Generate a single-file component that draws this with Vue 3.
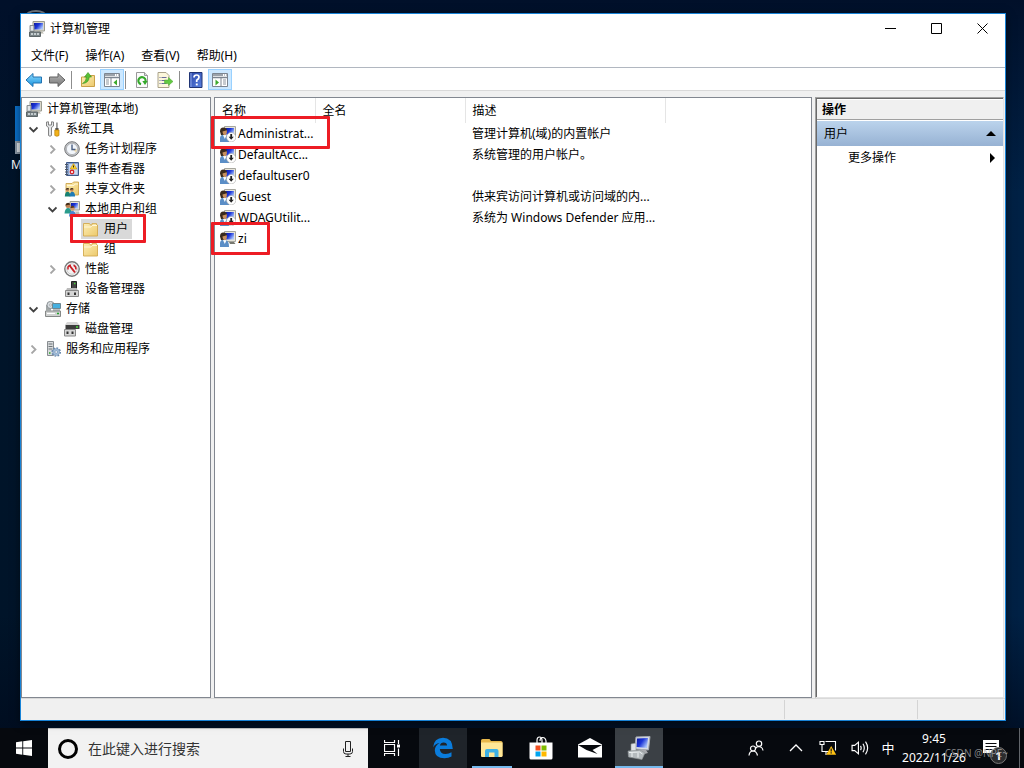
<script setup>
import { ref } from 'vue'

const menus = ['文件(F)', '操作(A)', '查看(V)', '帮助(H)']

const tree = [
  { label: '计算机管理(本地)', icon: 'mgmt', level: 0 },
  { label: '系统工具', icon: 'tools', level: 1, state: 'open' },
  { label: '任务计划程序', icon: 'clock', level: 2, state: 'closed' },
  { label: '事件查看器', icon: 'event', level: 2, state: 'closed' },
  { label: '共享文件夹', icon: 'share', level: 2, state: 'closed' },
  { label: '本地用户和组', icon: 'users', level: 2, state: 'open' },
  { label: '用户', icon: 'folder', level: 3, selected: true, marked: true },
  { label: '组', icon: 'folder', level: 3 },
  { label: '性能', icon: 'perf', level: 2, state: 'closed' },
  { label: '设备管理器', icon: 'device', level: 2 },
  { label: '存储', icon: 'storage', level: 1, state: 'open' },
  { label: '磁盘管理', icon: 'disk', level: 2 },
  { label: '服务和应用程序', icon: 'services', level: 1, state: 'closed' }
]

const users = [
  { name: 'Administrat...', desc: '管理计算机(域)的内置帐户', off: true, mark: 'wide' },
  { name: 'DefaultAcc...', desc: '系统管理的用户帐户。', off: true },
  { name: 'defaultuser0', desc: '', off: true },
  { name: 'Guest', desc: '供来宾访问计算机或访问域的内...', off: true },
  { name: 'WDAGUtilit...', desc: '系统为 Windows Defender 应用...', off: true },
  { name: 'zi', desc: '', off: false, mark: 'narrow' }
]

const apps = [
  { icon: 'edge', label: 'Edge', cls: 'hover' },
  { icon: 'explorer', label: '文件资源管理器', cls: 'running' },
  { icon: 'store', label: '应用商店', cls: '' },
  { icon: 'mail', label: '邮件', cls: '' },
  { icon: 'mgmtbig', label: '计算机管理', cls: 'active' }
]

const query = ref('')
</script>

<template>
  <svg class="sprites" aria-hidden="true">
    <defs>
      <linearGradient id="g-screen" x1="0" y1="0" x2="1" y2="0.6">
        <stop offset="0" stop-color="#0a18a0" /><stop offset="0.5" stop-color="#1c35d8" /><stop offset="1" stop-color="#a9c4fb" />
      </linearGradient>
      <linearGradient id="g-folder" x1="0" y1="0" x2="1" y2="1">
        <stop offset="0" stop-color="#fdeeb4" /><stop offset="1" stop-color="#ecc96c" />
      </linearGradient>
      <linearGradient id="g-back" x1="0" y1="0" x2="0" y2="1">
        <stop offset="0" stop-color="#8fdcff" /><stop offset="1" stop-color="#1590dc" />
      </linearGradient>
      <linearGradient id="g-fwd" x1="0" y1="0" x2="0" y2="1">
        <stop offset="0" stop-color="#b5b5b5" /><stop offset="1" stop-color="#777" />
      </linearGradient>
      <linearGradient id="g-help" x1="0" y1="0" x2="1" y2="1">
        <stop offset="0" stop-color="#2a45a8" /><stop offset="1" stop-color="#5a82e0" />
      </linearGradient>
    </defs>
    <symbol id="i-mgmt" viewBox="0 0 16 16">
      <path d="M4 0.5H15.5V10H4Z" fill="#d9d7cb" stroke="#9a9a90" />
      <path d="M5 2H14V8.5H5Z" fill="url(#g-screen)" />
      <path d="M8 10.5h5l2 2h-6z" fill="#b9b7ac" />
      <path d="M1 4.5h4v6H1z" fill="#c6ccd0" stroke="#8a8f92" />
      <path d="M2 6h2M2 8h2" stroke="#fff" />
      <path d="M0.5 11h11v4.5h-11z" fill="#7b8588" stroke="#5c6567" />
      <path d="M2 13h2M5 13h2M8 13h2" stroke="#dde4e5" stroke-width="1.4" />
    </symbol>
    <symbol id="i-tools" viewBox="0 0 16 16">
      <path d="M1.500 1v4L3.500 6.500v8q1.500 1.500 3 0v-8L8.500 5V1L6.500 .8V4h-3V.8z" fill="#e3e5e7" stroke="#777" stroke-width="0.9" />
      <path d="M11 1.500h1.800v6H11z" fill="#999" />
      <path d="M10.300 7h3.200v2h-3.200z" fill="#555" />
      <path d="M9.800 9h4.200v5.500q-2.100 1.600-4.200 0z" fill="#f2b21b" stroke="#b67c06" stroke-width="0.7" />
    </symbol>
    <symbol id="i-clock" viewBox="0 0 16 16">
      <circle cx="8" cy="8" r="7.3" fill="#c4c6c9" stroke="#75777a" />
      <circle cx="8" cy="8" r="5.6" fill="#f2f6fb" stroke="#9a9c9f" stroke-width="0.6" />
      <path d="M8 8l4 3.500A5 5 0 0 0 13 8z" fill="#f3d79a" opacity="0.7" />
      <path d="M8 3.500V8.500h3.500" fill="none" stroke="#4b5f82" stroke-width="1.400" />
    </symbol>
    <symbol id="i-event" viewBox="0 0 16 16">
      <path d="M2.500 1.500h12v13h-12z" fill="#8aa4cf" stroke="#405a8a" />
      <path d="M5 3h8.500v10.500H5z" fill="#c9d7ee" />
      <path d="M1 3.500h3M1 6h3M1 8.500h3M1 11h3M1 13.500h3" stroke="#4d5663" />
      <path d="M9.500 2.500l3.300 5.500H6.200z" fill="#ffd530" stroke="#bf8b00" stroke-width="0.6" />
      <path d="M9.500 4.500v2" stroke="#222" />
      <circle cx="8" cy="11" r="2.400" fill="#d8262c" />
      <path d="M7 10l2 2M9 10l-2 2" stroke="#fff" stroke-width="0.8" />
    </symbol>
    <symbol id="i-share" viewBox="0 0 16 16">
      <path d="M2 2.500h6l1.500-1.500h5v13H2z" fill="url(#g-folder)" stroke="#c79b3c" stroke-width="0.8" />
      <path d="M3 4.500h7l1-1.500h3" fill="none" stroke="#fff6d8" />
      <circle cx="3.500" cy="9" r="1.700" fill="#c88a58" /><path d="M1.600 8.800a2 2 0 0 1 3.800-.6z" fill="#43301e" />
      <circle cx="7.800" cy="9" r="1.700" fill="#c88a58" /><path d="M5.900 8.800a2 2 0 0 1 3.800-.6z" fill="#43301e" />
      <path d="M.8 15.500q.2-4.800 2.800-4.800t2.800 4.800z" fill="#178272" />
      <path d="M5.500 15.500q.2-4.800 2.800-4.800t2.800 4.800z" fill="#207bb5" />
    </symbol>
    <symbol id="i-users" viewBox="0 0 16 16">
      <path d="M6 0.500h9.500v8.500H6z" fill="#e4e2d8" stroke="#9b9b94" />
      <path d="M7 2h7v5.500H7z" fill="url(#g-screen)" />
      <circle cx="4" cy="4.500" r="2.500" fill="#bd8050" /><path d="M1.500 4.500a2.500 2.700 0 0 1 4.800-1z" fill="#3f2a18" />
      <path d="M.5 12.500q.5-5.500 3.500-5.500t4 5.500z" fill="#2a9c8c" />
      <circle cx="8.500" cy="7.500" r="2.200" fill="#d09a6a" /><path d="M6.300 7.300a2.200 2.400 0 0 1 4.300-.8z" fill="#5a3a20" />
      <path d="M5 15.500q.3-5.500 3.500-5.500t4 5.500z" fill="#4a86cf" />
      <path d="M11 10.500h4l.5 2.500h-3.500z" fill="#bebcb2" />
    </symbol>
    <symbol id="i-folder" viewBox="0 0 16 16">
      <path d="M.5 2.500h6l1 1.500h7v11H.5z" fill="url(#g-folder)" stroke="#d2a94e" stroke-width="0.9" />
      <path d="M9 5V2.500h4.500V5" fill="#f9e3a0" stroke="#d2a94e" stroke-width="0.8" />
      <path d="M1 6h7l1-1.500h5" fill="none" stroke="#fff6d8" />
    </symbol>
    <symbol id="i-perf" viewBox="0 0 16 16">
      <circle cx="8" cy="8" r="7.200" fill="#fff" stroke="#777" stroke-width="1.400" />
      <circle cx="8" cy="8" r="5.300" fill="#f2f2f2" stroke="#aaa" stroke-width="0.6" />
      <path d="M4 8.500V6Q5 4.200 7 4.300M9.500 4.300Q12 5 12 8.500" fill="none" stroke="#c91f26" stroke-width="1.500" />
      <path d="M5.500 4.500l5.500 7" stroke="#c91f26" stroke-width="2" />
    </symbol>
    <symbol id="i-device" viewBox="0 0 16 16">
      <path d="M7.500 0.500h5v7h-5z" fill="#444" stroke="#222" /><path d="M10 2.500h1.500" stroke="#48d13c" stroke-width="1.300" />
      <path d="M3 7h9.500l1.500 2.500H2z" fill="#bbb" />
      <path d="M1.500 9.500h13v6h-13z" fill="#d5d5d5" stroke="#888" />
      <path d="M3.500 11.500h2v2.500h-2zM10 11.500h2v2.500h-2z" fill="#333" />
    </symbol>
    <symbol id="i-storage" viewBox="0 0 16 16">
      <path d="M0.500 10h15v5.500h-15z" fill="#cfd1d0" stroke="#858887" /><path d="M2 12.500h8" stroke="#fff" />
      <path d="M12 12.500h2" stroke="#20a22b" stroke-width="1.600" />
      <path d="M1 4h5v6H1z" fill="#a3a8a8" /><circle cx="5.500" cy="4" r="3.600" fill="#d7dce0" stroke="#8c9296" /><circle cx="5.500" cy="4" r="1" fill="#fff" stroke="#777" stroke-width="0.5" />
      <path d="M7.500 2.500h8v5h-8z" fill="#45afdf" stroke="#6f8790" /><path d="M8 8.500h7v1H8z" fill="#747c80" />
    </symbol>
    <symbol id="i-disk" viewBox="0 0 16 16">
      <path d="M3 1h10l2.500 3H1z" fill="#d6d6d6" /><path d="M1.500 4h14v4h-14z" fill="#3c3c3c" />
      <path d="M12 6h2" stroke="#4ddd40" stroke-width="1.400" />
      <path d="M0.500 8.500h11v6.500h-11z" fill="#d5d5d5" stroke="#888" />
      <path d="M2.500 10.500h2v2.500h-2zM7.500 10.500h2v2.500h-2z" fill="#333" />
    </symbol>
    <symbol id="i-services" viewBox="0 0 16 16">
      <path d="M2.500 0.500h6v14h-6z" fill="#d8dbdd" stroke="#888d91" />
      <path d="M3.500 3h4M3.500 5.500h4M3.500 8h4" stroke="#6d7377" /><path d="M4 12h1.500" stroke="#2aa32a" stroke-width="1.300" />
      <circle cx="11.200" cy="11" r="4" fill="none" stroke="#6384aa" stroke-width="1.600" stroke-dasharray="1.700 1.400" />
      <circle cx="11.200" cy="11" r="3.400" fill="#a6c0dc" stroke="#6f90b6" stroke-width="0.600" /><circle cx="11.200" cy="11" r="1.300" fill="#fff" stroke="#6384aa" stroke-width="0.6" />
    </symbol>
    <symbol id="i-user" viewBox="0 0 16 16">
      <path d="M4.500 0.500h11v10h-11z" fill="#e6e4da" stroke="#a6a69e" />
      <path d="M5.500 2h8.500v6.500H5.500z" fill="url(#g-screen)" />
      <path d="M9 11h5l1.500 2h-5.500z" fill="#77786f" />
      <path d="M0 5.500q0-4 3.300-4T7 4.500L5 9H1z" fill="#3a2a1c" />
      <path d="M2.500 5.500L6.800 4.300Q7.300 8.800 5 9.200 2.700 9 2.500 5.500z" fill="#c8915f" />
      <path d="M0 16v-4q.3-3 3-3.200l2 1 1.500-.6Q9 10.500 9 16z" fill="#5b8ec6" />
      <path d="M3 9l1.800 4L6.500 9.300z" fill="#fff" />
    </symbol>
    <symbol id="i-down" viewBox="0 0 16 16">
      <circle cx="11.200" cy="11.200" r="4.700" fill="#fff" stroke="#999" stroke-width="0.5" />
      <path d="M10.300 8h1.800v2.800h1.700l-2.600 3-2.600-3h1.700z" fill="#222" />
    </symbol>
    <symbol id="i-back" viewBox="0 0 18 16">
      <path d="M1 8L8 1.500V5h8.500v6H8v3.500z" fill="url(#g-back)" stroke="#2272b0" />
    </symbol>
    <symbol id="i-fwd" viewBox="0 0 18 16">
      <path d="M17 8L10 1.500V5H1.500v6H10v3.500z" fill="url(#g-fwd)" stroke="#606060" />
    </symbol>
    <symbol id="i-up" viewBox="0 0 16 16">
      <path d="M1.500 5h6L9 3.500h5.500v11h-13z" fill="url(#g-folder)" stroke="#c9a048" />
      <path d="M2.500 11.500Q6 10 6.500 5H4.500L8 .5 11.500 5H9.300q-.5 6-6.800 6.500z" fill="#58c036" stroke="#389018" stroke-width="0.6" />
    </symbol>
    <symbol id="i-paneleft" viewBox="0 0 18 16">
      <path d="M1.500 1.500h15v13h-15z" fill="#fff" stroke="#7c8590" /><path d="M2 3h10M2 5.500h14" stroke="#7c8590" stroke-width="1.400" />
      <path d="M13 3h1M15 3h1" stroke="#7c8590" /><path d="M8 6v8.500" stroke="#7c8590" />
      <path d="M3 8h3M3 10h3M3 12h3" stroke="#8e969f" /><path d="M14 7.500v6L10.500 10.500z" fill="#3ca92c" />
    </symbol>
    <symbol id="i-paneright" viewBox="0 0 18 16">
      <path d="M1.500 1.500h15v13h-15z" fill="#fff" stroke="#7c8590" /><path d="M2 3h10M2 5.500h14" stroke="#7c8590" stroke-width="1.400" />
      <path d="M13 3h1M15 3h1" stroke="#7c8590" /><path d="M10 6v8.500" stroke="#7c8590" />
      <path d="M12 8h3M12 10h3M12 12h3" stroke="#8e969f" /><path d="M4.500 7.500v6L8 10.500z" fill="#3ca92c" />
    </symbol>
    <symbol id="i-refresh" viewBox="0 0 16 16">
      <path d="M2.500 0.500h8l3 3v12h-11z" fill="#fbfbfb" stroke="#999" /><path d="M10.500 0.500v3h3" fill="#ddd" stroke="#999" />
      <path d="M7 12.200A3.600 3.600 0 1 1 11.500 9.500" fill="none" stroke="#35a92b" stroke-width="2.200" /><path d="M8.300 9h5.400l-2.700 4z" fill="#35a92b" />
    </symbol>
    <symbol id="i-export" viewBox="0 0 17 16">
      <path d="M1.500 0.500h8l3 3v12h-11z" fill="#fcf7dc" stroke="#aaa28a" />
      <path d="M3 5.500h1M5 5.500h5M3 8.500h1M5 8.500h5M3 11.500h1M5 11.500h5" stroke="#6b6b9c" />
      <path d="M8 8h4V5.500l4.500 4-4.500 4V11.500H8z" fill="#62c942" stroke="#4aa52e" stroke-width="0.5" />
    </symbol>
    <symbol id="i-help" viewBox="0 0 14 16">
      <path d="M0.500 0.500h12.500v15H0.500z" fill="url(#g-help)" stroke="#203474" /><path d="M2 1v14" stroke="#8fa8e8" />
      <path d="M5 5.500q0-2.500 2.500-2.500T10 5.300q0 1.500-2.300 3v1.700" fill="none" stroke="#fff" stroke-width="1.700" /><path d="M6.800 11.500h1.900v1.900H6.800z" fill="#fff" />
    </symbol>
    <symbol id="i-edge" viewBox="0 0 24 24">
      <path d="M2 11.500Q3 2 12 1.800q9.300 0 9.800 11.200H8.800q.4 5 5.700 5 3.500 0 6-1.700v4.200q-3 1.800-7 1.800Q4 22.300 3.800 14.500q0-4.700 4.700-7.500-4.500.8-6.500 4.500zM8.900 9.600h7.200q-.2-3.200-3.500-3.200-3 0-3.700 3.200z" fill="#0a7cdc" />
    </symbol>
    <symbol id="i-explorer" viewBox="0 0 24 24">
      <path d="M1 4.500q0-1.500 1.500-1.500h7l1.500 2h10q1.500 0 1.500 1.500V20H1z" fill="#e8b84b" />
      <path d="M1 6.500h21.500v13.500q0 1-1 1H2q-1 0-1-1z" fill="#ffe797" />
      <path d="M5 21v-6q0-2 2-2h9.500q2 0 2 2v6h-4v-4.500H9V21z" fill="#3eb1e5" />
    </symbol>
    <symbol id="i-store" viewBox="0 0 24 24">
      <path d="M8 8V4.500Q8 1 10.500 1T13 4.500V8M11 5q0-3.500 2.700-3.500T17 5v3" fill="none" stroke="#fff" stroke-width="1.200" />
      <path d="M0.500 6.500h23V22q0 1.500-1.500 1.500H2Q.500 23.500.500 22z" fill="#fff" />
      <path d="M6.500 9.500h5v5h-5z" fill="#f25022" /><path d="M12.500 9.500h5v5h-5z" fill="#7fba00" />
      <path d="M6.500 15.500h5v5h-5z" fill="#00a4ef" /><path d="M12.500 15.500h5v5h-5z" fill="#ffb900" />
    </symbol>
    <symbol id="i-mail" viewBox="0 0 24 24">
      <path d="M0 8.500L12 2l12 6.500V21.500H0z" fill="#fff" /><path d="M0 9h24L14.500 14 19.500 18 8.500 14z" fill="#080a0e" />
    </symbol>
    <symbol id="i-mgmtbig" viewBox="0 0 24 24">
      <path d="M9 1l14-0.500-1.500 13.500L8 13z" fill="#d9dde5" stroke="#a6abb4" />
      <path d="M10 2.500l11-.500-1 10L9.500 11z" fill="url(#g-screen)" />
      <path d="M13 14h6l2 3-7 2z" fill="#a9abaf" />
      <path d="M4 8l5-1v8l-5 1z" fill="#dfe2e5" stroke="#8e9396" stroke-width="0.6" />
      <path d="M1 15l12-1 5 3-3 6.500L1.500 21z" fill="#b4babd" stroke="#8e9396" stroke-width="0.6" />
      <path d="M2 16.500l10.500-.500 3 2M5 17v4M11 17v4.500" stroke="#eef2f3" fill="none" />
    </symbol>
    <symbol id="i-win" viewBox="0 0 16 16">
      <path d="M0 2.200L6.300 1.300V7.600H0zM7.200 1.200L16 0V7.600H7.200zM0 8.500H6.300v6.200L0 13.800zM7.200 8.500H16V16L7.200 14.800z" fill="#fff" />
    </symbol>
    <symbol id="i-mic" viewBox="0 0 12 18">
      <path d="M3.500 1.500h5v10h-5z M1.500 8.500v3q0 2.500 2.500 2.500h4q2.500 0 2.500-2.500v-3M6 14v2.500M3.500 16.500h5" fill="none" stroke="#222" />
    </symbol>
    <symbol id="i-taskview" viewBox="0 0 16 16">
      <path d="M0.500 0v2.500h10V0M0.500 16v-2.500h10V16M.5 4.500h10v7H.5zM14.500 0v4M14.500 8.500V16" fill="none" stroke="#fff" stroke-width="1.200" /><path d="M13 4.500h3v3h-3z" fill="#fff" />
    </symbol>
    <symbol id="i-people" viewBox="0 0 16 16">
      <g fill="none" stroke="#fff" stroke-width="1.200"><circle cx="11" cy="3.700" r="2.700" /><path d="M7.500 8.500q1-2 3.500-2 3.500.5 4 4" /><circle cx="5" cy="8.500" r="2.500" /><path d="M1 15.500q.5-4.500 4-4.500t4.500 4.500" /></g>
    </symbol>
    <symbol id="i-chev" viewBox="0 0 14 8"><path d="M1 7l6-6 6 6" fill="none" stroke="#fff" stroke-width="1.300" /></symbol>
    <symbol id="i-net" viewBox="0 0 17 16">
      <path d="M6 1.500h10v9M4 11.500h6M6.500 12v3M2.500 5v3.500M.5 1.500h4v3h-4zM2.500 8v3.500h3" fill="none" stroke="#fff" stroke-width="1.100" />
      <path d="M11.700 6l5 8.700H6.700z" fill="#ffc215" /><path d="M11.700 8.500v3M11.700 12.300v1.300" stroke="#222" stroke-width="1.300" />
    </symbol>
    <symbol id="i-vol" viewBox="0 0 17 14">
      <path d="M1 4.500h2.500L7 1.500v11l-3.500-3H1zM9 5q1.200 2 0 4M11.300 3q2.500 4 0 8M13.700 1q4 6 0 12" fill="none" stroke="#fff" stroke-width="1.100" />
    </symbol>
    <symbol id="i-note" viewBox="0 0 16 16"><path d="M0 0h16v13h-3v3l-3-3H0z" fill="#fff" /><path d="M2.500 3.500h11M2.500 6.500h11M2.500 9.500h7" stroke="#08090c" /></symbol>
  </svg>

  <div class="desktop">
    <div class="bin"></div>
    <div class="shortcut"><span class="tile"></span><span class="arrow"></span><span class="cap">M</span></div>

    <main class="window">
      <header class="titlebar">
        <svg class="ic"><use href="#i-mgmt" /></svg>
        <h1>计算机管理</h1>
        <div class="controls">
          <button aria-label="最小化"><svg viewBox="0 0 11 11"><path d="M0 5.500h11" /></svg></button>
          <button aria-label="最大化"><svg viewBox="0 0 11 11"><path d="M.5.5h10v10H.5z" /></svg></button>
          <button aria-label="关闭"><svg viewBox="0 0 11 11"><path d="M.5.5l10 10M10.500.5l-10 10" /></svg></button>
        </div>
      </header>
      <nav class="menubar"><button v-for="m in menus" :key="m">{{ m }}</button></nav>
      <div class="toolbar">
        <button aria-label="后退"><svg class="ic18"><use href="#i-back" /></svg></button>
        <button aria-label="前进"><svg class="ic18"><use href="#i-fwd" /></svg></button>
        <i class="sep"></i>
        <button aria-label="上移"><svg class="ic"><use href="#i-up" /></svg></button>
        <button class="on" aria-label="显示控制台树"><svg class="ic18"><use href="#i-paneleft" /></svg></button>
        <i class="sep"></i>
        <button aria-label="刷新"><svg class="ic"><use href="#i-refresh" /></svg></button>
        <button aria-label="导出列表"><svg class="ic18"><use href="#i-export" /></svg></button>
        <i class="sep"></i>
        <button aria-label="帮助"><svg class="ic"><use href="#i-help" /></svg></button>
        <button class="on" aria-label="显示操作窗格"><svg class="ic18"><use href="#i-paneright" /></svg></button>
      </div>

      <div class="body">
        <ul class="tree">
          <li v-for="n in tree" :key="n.label" :class="'lv' + n.level">
            <span v-if="n.level" class="twist">
              <svg v-if="n.state === 'open'" viewBox="0 0 9 9"><path d="M.5 2.500l4 4 4-4" stroke="#404040" /></svg>
              <svg v-else-if="n.state === 'closed'" viewBox="0 0 9 9"><path d="M2.500.5l4 4-4 4" stroke="#a6a6a6" /></svg>
            </span>
            <span class="node" :class="{ selected: n.selected }">
              <svg class="ic"><use :href="'#i-' + n.icon" /></svg>
              <span>{{ n.label }}</span>
              <i v-if="n.marked" class="mark treemark"></i>
            </span>
          </li>
        </ul>

        <section class="list">
          <table>
            <colgroup><col class="c1" /><col class="c2" /><col class="c3" /><col /></colgroup>
            <thead><tr><th>名称</th><th>全名</th><th>描述</th><td></td></tr></thead>
            <tbody>
              <tr v-for="u in users" :key="u.name">
                <td>
                  <div class="user">
                    <svg class="ic"><use href="#i-user" /><use v-if="u.off" href="#i-down" /></svg>
                    <span>{{ u.name }}</span>
                    <i v-if="u.mark" class="mark" :class="u.mark"></i>
                  </div>
                </td>
                <td></td>
                <td>{{ u.desc }}</td>
                <td></td>
              </tr>
            </tbody>
          </table>
        </section>

        <aside class="actions">
          <h2>操作</h2>
          <button class="group">用户<svg viewBox="0 0 10 5"><path d="M0 5L5 0l5 5z" /></svg></button>
          <button class="more">更多操作<svg viewBox="0 0 5 10"><path d="M0 0l5 5-5 5z" /></svg></button>
        </aside>
      </div>
      <footer class="status"><span></span><span></span><span></span></footer>
    </main>

    <div class="taskbar">
      <button class="task" aria-label="开始"><svg class="ic"><use href="#i-win" /></svg></button>
      <label class="search">
        <span class="ring"></span>
        <input v-model="query" type="text" placeholder="在此键入进行搜索" aria-label="搜索" />
        <svg class="mic"><use href="#i-mic" /></svg>
      </label>
      <button class="task view" aria-label="任务视图"><svg class="ic"><use href="#i-taskview" /></svg></button>
      <button v-for="a in apps" :key="a.icon" class="task app" :class="a.cls" :aria-label="a.label">
        <svg class="ic24"><use :href="'#i-' + a.icon" /></svg>
      </button>
      <div class="tray">
        <button class="people" aria-label="人脉"><svg class="ic"><use href="#i-people" /></svg></button>
        <button aria-label="显示隐藏的图标"><svg class="chev"><use href="#i-chev" /></svg></button>
        <button aria-label="网络"><svg class="ic18"><use href="#i-net" /></svg></button>
        <button aria-label="音量"><svg class="ic18"><use href="#i-vol" /></svg></button>
        <button class="ime">中</button>
        <button class="clock"><span>9:45</span><span>2022/11/26</span></button>
        <button class="note" aria-label="通知"><svg class="ic"><use href="#i-note" /></svg><b>1</b></button>
        <span class="water">CSDN @NPE~</span>
      </div>
    </div>
  </div>
</template>

<style>
body { background: #001226; }
</style>

<style scoped>
* { box-sizing: border-box; }
.sprites { position: absolute; width: 0; height: 0; }
.desktop {
  position: relative;
  display: flex;
  flex-direction: column;
  min-height: 100vh;
  overflow: hidden;
  background: linear-gradient(180deg, #01102a 0%, transparent 25%, transparent 80%, #000b1d 100%), linear-gradient(90deg, #001429 0%, #001a34 60%, #002145 100%);
  font: 12px/16px "Noto Sans", "Noto Sans CJK SC", sans-serif;
  color: #000;
}
button { border: 0; padding: 0; background: none; font: inherit; color: inherit; display: flex; align-items: center; justify-content: center; }
svg { display: block; flex: none; }
h1, h2, ul { margin: 0; padding: 0; font: inherit; }
.ic { width: 16px; height: 16px; }
.ic18 { width: 18px; height: 16px; }
.ic24 { width: 24px; height: 24px; }

.bin { position: absolute; left: 25px; top: 10px; width: 22px; height: 12px; border: 2px solid #737a82; border-radius: 50%; }
.shortcut { position: absolute; left: 11px; top: 106px; width: 48px; color: #fff; }
.tile { display: block; margin-left: 4px; height: 35px; background: #0a6fc9; }
.arrow { display: block; margin-left: 4px; height: 13px; background: #dfe5ea; border: 2px solid #8a97a5; }
.cap { display: block; padding-top: 3px; }

.window {
  position: relative;
  flex: 1;
  display: flex;
  flex-direction: column;
  margin: 13px 18px 7px 20px;
  border: 1px solid #1883d7;
  background: #f0f0f0;
  box-shadow: 0 2px 8px rgba(0, 0, 0, 0.5);
}
.titlebar { display: flex; align-items: center; height: 29px; padding-left: 8px; background: #fff; }
.titlebar h1 { flex: 1; padding-left: 5px; }
.controls { display: flex; }
.controls button { width: 46px; height: 28px; }
.controls svg { width: 11px; height: 11px; fill: none; stroke: #000; }
.menubar { display: flex; gap: 17px; height: 24px; padding: 2px 0 0 10px; background: #fff; }
.toolbar { display: flex; align-items: flex-end; height: 24px; padding-left: 1px; background: #fff; border-top: 1px solid #b1b7c0; border-bottom: 1px solid #d9d9d9; }
.toolbar button { width: 23px; height: 21px; }
.toolbar .on { width: 24px; margin-left: 1px; border: 1px solid #99d1ff; background: #cce8ff; }
.sep { width: 1px; height: 18px; margin: 0 4px 1px 3px; background: #8d8d8d; }
.on + .sep { margin-left: 1px; }

.body { flex: 1; display: flex; padding: 6px 1px 0 0; }
.tree { width: 190px; list-style: none; background: #fff; border: 1px solid #828790; padding-top: 1px; }
.tree li { display: flex; align-items: center; height: 20px; padding-left: 4px; white-space: nowrap; }
.tree .lv2 { padding-left: 23px; }
.tree .lv3 { padding-left: 42px; }
.twist { width: 17px; padding-right: 2px; display: flex; justify-content: center; }
.twist svg { width: 9px; height: 9px; fill: none; stroke-width: 1.8; }
.node { position: relative; display: flex; align-items: center; gap: 5px; height: 20px; padding: 0 4px 0 2px; }
.lv0 .node { padding-left: 0; }
.selected { background: #d9d9d9; }
.mark { position: absolute; z-index: 1; border: 3px solid #ed1c24; border-radius: 1px; }
.treemark { left: -11px; top: -5px; width: 76px; height: 29px; }

.list { flex: 1; margin: 0 3px; background: #fff; border: 1px solid #828790; }
table { width: 100%; table-layout: fixed; border-collapse: collapse; }
.c1 { width: 100px; }
.c2 { width: 150px; }
.c3 { width: 200px; }
thead tr { height: 25px; }
th { padding: 1px 0 0 7px; text-align: left; font-weight: 400; border-right: 1px solid #e5e5e5; }
tbody tr { height: 21px; }
td { padding: 0 0 0 7px; white-space: nowrap; }
.user { position: relative; display: flex; align-items: center; gap: 2px; height: 21px; margin-left: -2px; }
.wide { left: -9px; top: -7px; width: 119px; height: 33px; }
.narrow { left: -9px; top: -6px; width: 59px; height: 33px; }

.actions { width: 189px; background: #fff; border: 1px solid #a0a0a0; border-right-color: #e3e3e3; border-bottom-color: #e3e3e3; box-shadow: inset 1px 1px 0 #696969; padding: 2px 0 0 1px; }
.actions h2 { height: 20px; padding: 1px 5px 0; background: #f0f0f0; border-bottom: 1px solid #a0a0a0; font-weight: 700; line-height: 18px; }
.actions button { width: 100%; justify-content: space-between; }
.actions svg { fill: #000; }
.group { height: 25px; margin-top: 1px; padding: 0 7px; background: linear-gradient(#bbd3ec, #97b2d3); }
.group svg { width: 10px; height: 5px; }
.more { height: 23px; padding: 0 8px 0 31px; }
.more svg { width: 5px; height: 10px; }

.status { display: flex; justify-content: flex-end; height: 22px; border-top: 1px solid #d9d9d9; padding: 1px 1px 1px 0; }
.status span { border-right: 1px solid #d4d4d4; width: 133px; }
.status span:last-child { width: 86px; }

.taskbar { display: flex; height: 40px; background: #06090e; color: #fff; }
.task { width: 48px; }
.view { margin-right: 2px; }
.app { margin-left: 1px; border-bottom: 2px solid transparent; padding-top: 2px; }
.hover { background: #1f242a; }
.running { background: linear-gradient(#76b9ed, #76b9ed) bottom / 40px 2px no-repeat border-box; }
.active { background: #3b4045; border-color: #76b9ed; }
.search { flex: 0 1 320px; display: flex; align-items: center; background: #f2f2f2; border-top: 1px solid #c4c4c4; padding: 0 14px 0 10px; }
.ring { flex: none; width: 20px; height: 20px; border: 3px solid #000; border-radius: 50%; }
.search input { flex: 1; min-width: 0; border: 0; outline: 0; padding: 0 0 0 10px; background: none; font: 14px/20px "Noto Sans", "Noto Sans CJK SC", sans-serif; color: #222; }
.search input::placeholder { color: #333; opacity: 1; }
.mic { width: 12px; height: 18px; }
.tray { position: relative; display: flex; margin-left: auto; padding-right: 4px; }
.tray button { width: 32px; }
.tray .people { margin-right: 8px; }
.chev { width: 14px; height: 8px; }
.tray .ime { width: 24px; font-size: 13px; }
.tray .clock { width: 68px; flex-direction: column; line-height: 19px; }
.tray .note { position: relative; width: 52px; padding-right: 6px; border-right: 1px solid #62666b; }
.note b { position: absolute; left: 22px; top: 19px; width: 17px; height: 17px; border: 1px solid #777; border-radius: 50%; background: #2b2c2e; font-size: 11px; line-height: 15px; }
.water { position: absolute; right: 16px; top: 18px; font-size: 10px; line-height: 14px; color: rgba(170, 170, 170, 0.75); white-space: nowrap; }
</style>
